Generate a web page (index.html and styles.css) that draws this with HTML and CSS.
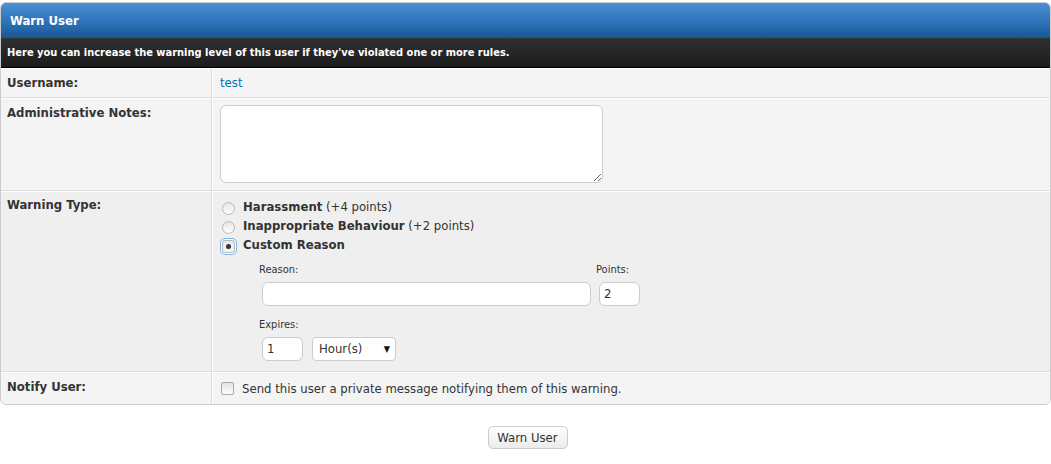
FILE: index.html
```html
<!DOCTYPE html>
<html>
<head>
<meta charset="utf-8">
<title>Warn User</title>
<link rel="stylesheet" href="styles.css">
</head>
<body>
<div class="panel">
  <div class="thead">Warn User</div>
  <div class="tcat">Here you can increase the warning level of this user if they've violated one or more rules.</div>
  <div class="row trow1 r-user">
    <div class="label">Username:</div>
    <div class="value"><a href="#" class="link">test</a></div>
  </div>
  <div class="row trow1 r-notes">
    <div class="label">Administrative Notes:</div>
    <div class="value"><textarea class="notes"></textarea></div>
  </div>
  <div class="row trow2 r-type">
    <div class="label">Warning Type:</div>
    <div class="value">
      <div class="opt"><span class="radio"></span><b>Harassment</b>&nbsp;(+4 points)</div>
      <div class="opt"><span class="radio"></span><b>Inappropriate Behaviour</b>&nbsp;(+2 points)</div>
      <div class="opt"><span class="radio checked"><span class="dot"></span></span><b>Custom Reason</b></div>
      <div class="custom">
        <div class="custom-row">
          <div class="field">
            <div class="small">Reason:</div>
            <div class="input reason"></div>
          </div>
          <div class="field">
            <div class="small">Points:</div>
            <div class="input short">2</div>
          </div>
        </div>
        <div class="field expires">
          <div class="small">Expires:</div>
          <div class="inline">
            <div class="input short">1</div>
            <div class="select">Hour(s)<span class="arrow">▼</span></div>
          </div>
        </div>
      </div>
    </div>
  </div>
  <div class="row trow1 r-notify">
    <div class="label">Notify User:</div>
    <div class="value notify"><span class="checkbox"></span>Send this user a private message notifying them of this warning.</div>
  </div>
</div>
<div class="actions"><button class="button">Warn User</button></div>
</body>
</html>
```

FILE: styles.css
```css
html, body {
  margin: 0;
  padding: 0;
  background: #fff;
}
body {
  font-family: "DejaVu Sans Condensed", "Liberation Sans", sans-serif;
  font-size: 13px;
  color: #333;
  padding-top: 2px;
}
.panel {
  border: 1px solid #ccc;
  border-radius: 6px;
  overflow: hidden;
  width: 1049px;
}
.thead {
  height: 35px;
  line-height: 35px;
  padding-left: 9px;
  color: #fff;
  font-weight: bold;
  font-size: 13px;
  background: linear-gradient(#4990d6, #2b6fb4 60%, #1a5693);
  border-bottom: 1px solid #263c30;
}
.tcat {
  height: 28px;
  line-height: 28px;
  padding-left: 6px;
  color: #fff;
  font-weight: bold;
  font-size: 11px;
  background: linear-gradient(#303030, #1c1c1c);
  border-bottom: 1px solid #000;
}
.row {
  display: grid;
  grid-template-columns: 211px 1fr;
}
.row > div {
  border-top: 1px solid #fff;
  border-bottom: 1px solid #ddd;
}
.row .label {
  border-right: 1px solid #ddd;
  font-weight: bold;
  padding: 6px 6px;
}
.row .value {
  border-left: 1px solid #fff;
  padding: 6px 7px;
}
.trow1 { background: #f4f4f4; }
.trow2 { background: #efefef; }
.r-user > div { height: 16px; line-height: 16px; padding-top: 9px; padding-bottom: 4px; }
.r-type .label { padding-top: 5px; }
.r-type .value { padding-top: 5px; padding-bottom: 6px; }
.link { color: #0072bc; text-decoration: none; }
.notes {
  display: block;
  width: 383px;
  height: 78px;
  box-sizing: border-box;
  border: 1px solid #ccc;
  border-radius: 6px;
  background: #fff;
  margin: 0 0 1px 0;
  resize: both;
}
.opt {
  display: flex;
  align-items: center;
  height: 19px;
}
.opt b { color: #333; }
.radio {
  width: 11px;
  height: 11px;
  border: 1px solid #b9b9b9;
  border-radius: 50%;
  background: linear-gradient(#e6e6e6, #fdfdfd);
  margin: 3px 8px 0 2px;
  flex: none;
  box-sizing: content-box;
  display: flex;
  align-items: center;
  justify-content: center;
}
.radio.checked {
  box-shadow: 0 0 0 1px #fff, 0 0 0 2px #7eb4ea;
  border-radius: 3px;
  background: linear-gradient(#e6e6e6, #f6f6f6);
}
.radio .dot {
  width: 5px;
  height: 5px;
  border-radius: 50%;
  background: #333;
}
.custom {
  padding: 8px 0 4px 42px;
}
.custom-row {
  display: flex;
  gap: 8px;
}
.small {
  font-size: 11px;
  height: 15px;
  line-height: 15px;
  margin-left: -3px;
  margin-bottom: 5px;
}
.input {
  height: 22px;
  line-height: 22px;
  border: 1px solid #ccc;
  border-radius: 6px;
  background: #fff;
  padding: 0 4px;
  box-sizing: content-box;
}
.reason { width: 319px; }
.short { width: 31px; }
.expires { margin-top: 11px; }
.inline { display: flex; gap: 9px; }
.select {
  width: 71px;
  height: 22px;
  line-height: 22px;
  border: 1px solid #ccc;
  border-radius: 4px;
  background: #fff;
  padding: 0 5px 0 6px;
  color: #333;
  display: flex;
  justify-content: space-between;
}
.arrow { font-size: 9px; color: #111; }
.notify {
  display: flex;
  align-items: center;
  height: 19px;
}
.r-notify > div { padding-top: 8px; padding-bottom: 5px; border-bottom: none; }
.checkbox {
  width: 11px;
  height: 11px;
  border: 1px solid #a9a9a9;
  border-radius: 2px;
  background: linear-gradient(#e4e4e4, #fcfcfc);
  margin: 0 8px 0 1px;
}
.actions {
  text-align: center;
  padding-top: 21px;
}
.button {
  font-family: inherit;
  font-size: 13px;
  color: #333;
  width: 80px;
  height: 23px;
  border: 1px solid #ccc;
  border-radius: 5px;
  background: linear-gradient(#fff, #ebebeb);
  padding: 0;
  margin-left: 4px;
}
```
